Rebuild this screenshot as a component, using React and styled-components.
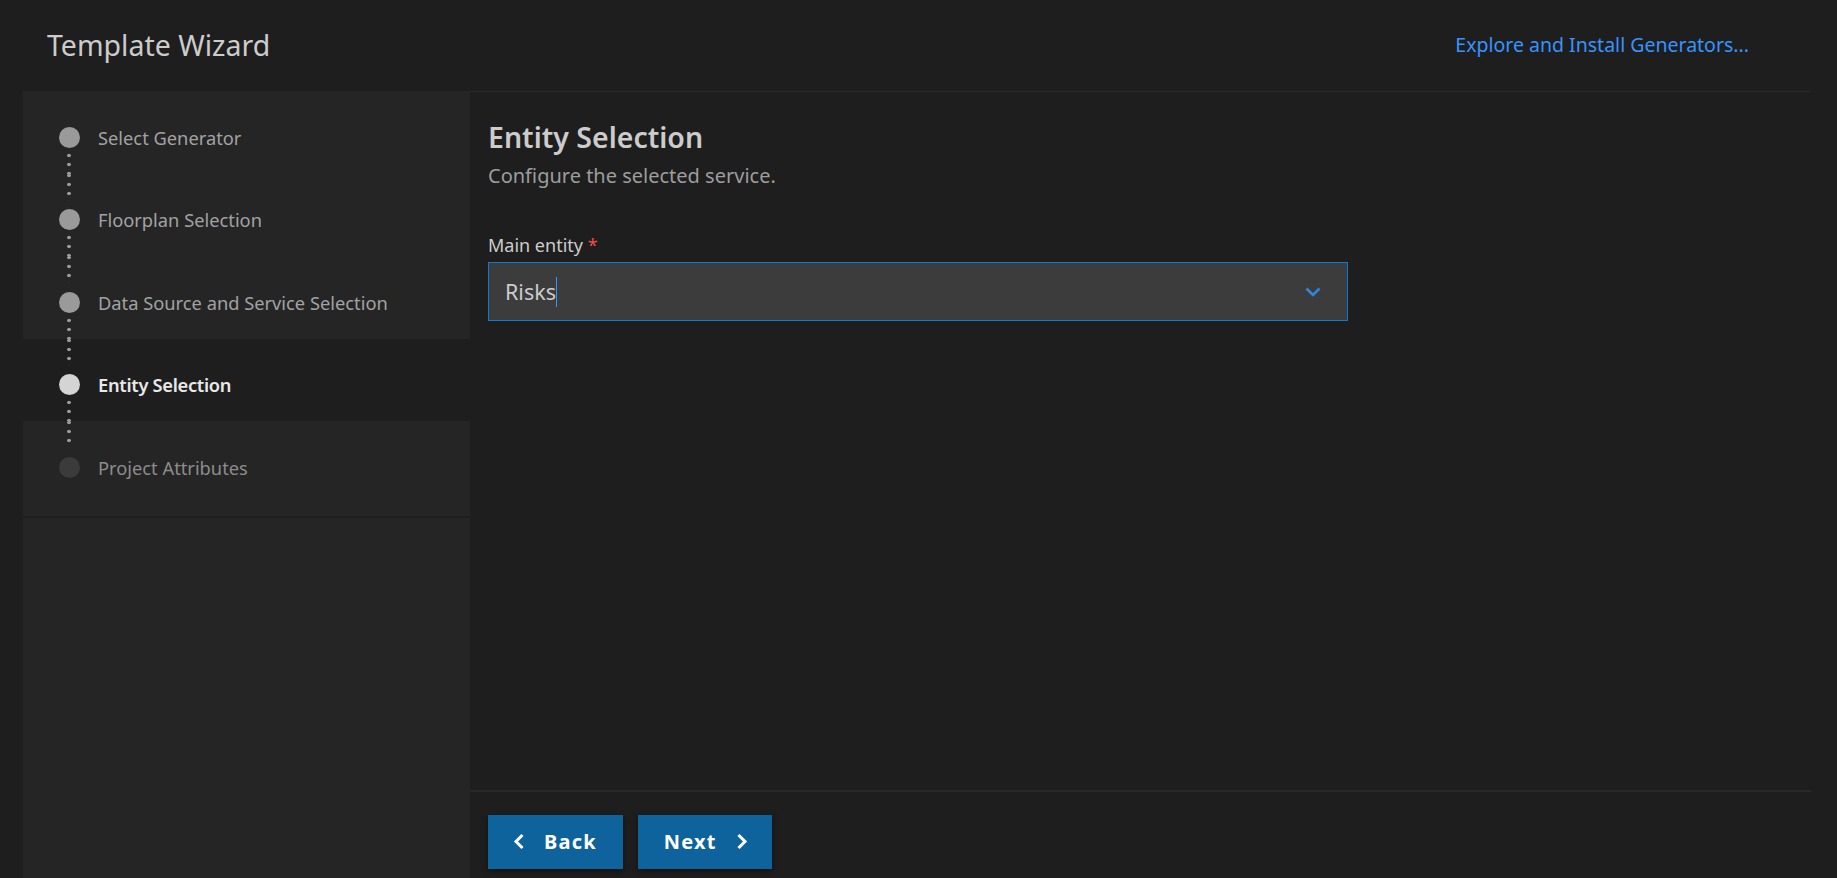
import React from "react";
import styled, { createGlobalStyle } from "styled-components";

const steps = [
  { label: "Select Generator", state: "done" },
  { label: "Floorplan Selection", state: "done" },
  { label: "Data Source and Service Selection", state: "done" },
  { label: "Entity Selection", state: "active" },
  { label: "Project Attributes", state: "todo" },
];

const Global = createGlobalStyle`
  html, body {
    margin: 0;
    padding: 0;
    background: #1e1e1e;
    overflow: hidden;
  }
  * { box-sizing: border-box; }
`;

const ChevronLeft = () => (
  <svg width="12" height="17" viewBox="0 0 12 17">
    <polyline points="9.5,2 3,8.5 9.5,15" fill="none" stroke="#fff" strokeWidth="3" />
  </svg>
);

const ChevronRight = () => (
  <svg width="12" height="17" viewBox="0 0 12 17">
    <polyline points="2.5,2 9,8.5 2.5,15" fill="none" stroke="#fff" strokeWidth="3" />
  </svg>
);

const ChevronDown = () => (
  <svg width="16" height="10" viewBox="0 0 16 10">
    <polyline points="1.5,1.5 8,8 14.5,1.5" fill="none" stroke="#2f86e0" strokeWidth="2.6" />
  </svg>
);

const App = () => {
  return (
    <>
      <Global />
      <Page>
        <Header>
          <Title>Template Wizard</Title>
          <ExploreLink>Explore and Install Generators...</ExploreLink>
        </Header>
        <Body>
          <Sidebar>
            <StepList>
              {steps.map((s, i) => (
                <StepRow key={s.label} $active={s.state === "active"}>
                  <Rail>
                    <TopDots $off={i === 0} />
                    <Dot $state={s.state} />
                    <BottomDots $off={i === steps.length - 1} />
                  </Rail>
                  <StepLabel $state={s.state}>{s.label}</StepLabel>
                </StepRow>
              ))}
            </StepList>
          </Sidebar>
          <Main>
            <Content>
              <Heading>Entity Selection</Heading>
              <Subtitle>Configure the selected service.</Subtitle>
              <Field>
                <FieldLabel>
                  Main entity <Required>*</Required>
                </FieldLabel>
                <Select>
                  <SelectValue>
                    Risks
                    <Caret />
                  </SelectValue>
                  <ChevronDown />
                </Select>
              </Field>
            </Content>
            <Footer>
              <NavButton>
                <ChevronLeft />
                <span>Back</span>
              </NavButton>
              <NavButton $next>
                <span>Next</span>
                <ChevronRight />
              </NavButton>
            </Footer>
          </Main>
        </Body>
      </Page>
    </>
  );
};

export default App;

const Page = styled.div`
  height: 878px;
  display: flex;
  flex-direction: column;
  background: #1e1e1e;
  font-family: "Noto Sans", "Open Sans", sans-serif;
`;

const Header = styled.div`
  height: 91px;
  flex-shrink: 0;
  display: flex;
  align-items: center;
  justify-content: space-between;
  padding: 0 88px 2px 47px;
`;

const Title = styled.h1`
  margin: 0;
  font-size: 28.5px;
  font-weight: 400;
  color: #cccccc;
`;

const ExploreLink = styled.a`
  font-size: 19.5px;
  color: #3794ff;
  cursor: pointer;
`;

const Body = styled.div`
  flex: 1;
  display: flex;
  margin: 0 26px 0 23px;
  min-height: 0;
`;

const Sidebar = styled.div`
  width: 447px;
  flex-shrink: 0;
  background: #252526;
`;

const StepList = styled.div`
  display: flex;
  flex-direction: column;
  padding-bottom: 12px;
  border-bottom: 2px solid #1f1f1f;
`;

const StepRow = styled.div`
  height: 82.5px;
  display: flex;
  padding-left: 35px;
  background: ${(p) => (p.$active ? "#1e1e1e" : "#252526")};
`;

const Rail = styled.div`
  width: 22px;
  display: flex;
  flex-direction: column;
  align-items: center;
`;

const dotted = `
  width: 4px;
  background-image: radial-gradient(circle, #9a9a9a 1.5px, transparent 2.1px);
  background-size: 4px 9px;
`;

const TopDots = styled.div`
  ${dotted}
  height: 27px;
  margin-bottom: 8.5px;
  background-position: 0 -3px;
  visibility: ${(p) => (p.$off ? "hidden" : "visible")};
`;

const BottomDots = styled.div`
  ${dotted}
  flex: 1;
  margin-top: 3px;
  visibility: ${(p) => (p.$off ? "hidden" : "visible")};
`;

const Dot = styled.div`
  width: 21px;
  height: 21px;
  border-radius: 50%;
  flex-shrink: 0;
  background: ${(p) =>
    p.$state === "active" ? "#d4d4d4" : p.$state === "done" ? "#9a9a9a" : "#3b3b3b"};
`;

const StepLabel = styled.div`
  margin: 34.5px 0 0 18px;
  height: 24px;
  line-height: 24px;
  font-size: 18.3px;
  color: ${(p) => (p.$state === "active" ? "#e8e8e8" : p.$state === "done" ? "#a2a2a2" : "#8c8c8c")};
  font-weight: ${(p) => (p.$state === "active" ? 600 : 400)};
  letter-spacing: ${(p) => (p.$state === "active" ? "-0.3px" : "0")};
`;

const Main = styled.div`
  flex: 1;
  display: flex;
  flex-direction: column;
  border-top: 1px solid #2a2a2a;
  min-width: 0;
`;

const Content = styled.div`
  flex: 1;
  padding: 25px 19px 0 18px;
`;

const Heading = styled.h2`
  margin: 0;
  font-size: 28.5px;
  font-weight: 600;
  color: #cccccc;
  line-height: 40px;
`;

const Subtitle = styled.div`
  margin-top: 5px;
  font-size: 20px;
  color: #9d9d9d;
  line-height: 28px;
`;

const Field = styled.div`
  margin-top: 43px;
  width: 860px;
`;

const FieldLabel = styled.div`
  font-size: 18px;
  color: #cccccc;
  line-height: 24px;
  margin-bottom: 5px;
`;

const Required = styled.span`
  color: #f14c4c;
`;

const Select = styled.div`
  height: 59px;
  display: flex;
  align-items: center;
  justify-content: space-between;
  background: #3c3c3c;
  border: 1px solid #0e7ad3;
  padding: 0 26px 0 16px;
`;

const SelectValue = styled.div`
  display: flex;
  align-items: center;
  font-size: 21.5px;
  color: #cccccc;
`;

const Caret = styled.span`
  width: 1px;
  height: 30px;
  background: #3794ff;
`;

const Footer = styled.div`
  height: 88px;
  flex-shrink: 0;
  display: flex;
  gap: 15px;
  padding: 23px 0 0 18px;
  border-top: 2px solid #292929;
`;

const NavButton = styled.button`
  height: 54px;
  display: flex;
  align-items: center;
  gap: 19px;
  padding: ${(p) => (p.$next ? "0 24px 1px 26px" : "0 26px 1px 25px")};
  background: #0e639c;
  border: none;
  color: #ffffff;
  font-family: "Noto Sans", "Open Sans", sans-serif;
  font-size: 20px;
  font-weight: 700;
  letter-spacing: 1.2px;
  box-shadow: 0 2px 6px rgba(0, 0, 0, 0.45);
  cursor: pointer;
`;
